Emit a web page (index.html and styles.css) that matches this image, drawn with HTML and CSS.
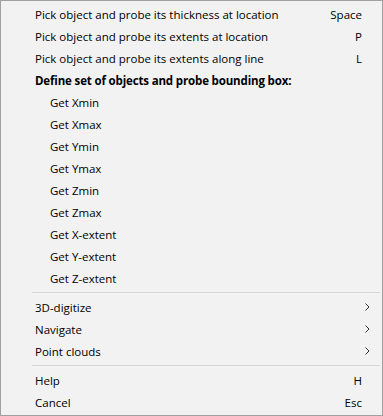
FILE: index.html
```html
<!DOCTYPE html>
<html lang="en">
<head>
  <meta charset="UTF-8">
  <title>Probe menu</title>
  <link rel="stylesheet" href="styles.css">
</head>
<body>
  <div class="menu">
    <div class="item"><span class="label">Pick object and probe its thickness at location</span><span class="key">Space</span></div>
    <div class="item"><span class="label">Pick object and probe its extents at location</span><span class="key">P</span></div>
    <div class="item"><span class="label">Pick object and probe its extents along line</span><span class="key">L</span></div>
    <div class="item heading"><span class="label">Define set of objects and probe bounding box:</span></div>
    <div class="item sub"><span class="label">Get Xmin</span></div>
    <div class="item sub"><span class="label">Get Xmax</span></div>
    <div class="item sub"><span class="label">Get Ymin</span></div>
    <div class="item sub"><span class="label">Get Ymax</span></div>
    <div class="item sub"><span class="label">Get Zmin</span></div>
    <div class="item sub"><span class="label">Get Zmax</span></div>
    <div class="item sub"><span class="label">Get X-extent</span></div>
    <div class="item sub"><span class="label">Get Y-extent</span></div>
    <div class="item sub"><span class="label">Get Z-extent</span></div>

    <div class="sep"></div>

    <div class="item"><span class="label">3D-digitize</span><span class="arrow"><svg width="5" height="8" viewBox="0 0 5 8"><path d="M0.5,0.5 L4,4 L0.5,7.5" fill="none" stroke="#333" stroke-width="1"/></svg></span></div>
    <div class="item"><span class="label">Navigate</span><span class="arrow"><svg width="5" height="8" viewBox="0 0 5 8"><path d="M0.5,0.5 L4,4 L0.5,7.5" fill="none" stroke="#333" stroke-width="1"/></svg></span></div>
    <div class="item"><span class="label">Point clouds</span><span class="arrow"><svg width="5" height="8" viewBox="0 0 5 8"><path d="M0.5,0.5 L4,4 L0.5,7.5" fill="none" stroke="#333" stroke-width="1"/></svg></span></div>

    <div class="sep"></div>

    <div class="item"><span class="label">Help</span><span class="key">H</span></div>
    <div class="item"><span class="label">Cancel</span><span class="key">Esc</span></div>
  </div>
</body>
</html>
```

FILE: styles.css
```css
body {
  margin: 0;
  background: #f2f2f2;
}
.menu {
  box-sizing: border-box;
  width: 383px;
  height: 416px;
  border: 1px solid #a0a0a0;
  background: #f2f2f2;
  padding: 2px 0;
  font-family: "Open Sans", "Noto Sans", sans-serif;
  font-size: 11.5px;
  color: #000;
}
.item {
  display: flex;
  align-items: center;
  height: 22px;
  padding: 0 20px 0 34px;
}
.label {
  flex: 1;
  white-space: nowrap;
}
.heading .label {
  font-weight: bold;
  letter-spacing: -0.15px;
}
.sub {
  padding-left: 49px;
}
.key {
  text-align: right;
}
.arrow {
  display: flex;
  margin-right: -8px;
}
.sep {
  height: 1px;
  margin: 3px 2px 3px 31px;
  background: #d7d7d7;
}
```
